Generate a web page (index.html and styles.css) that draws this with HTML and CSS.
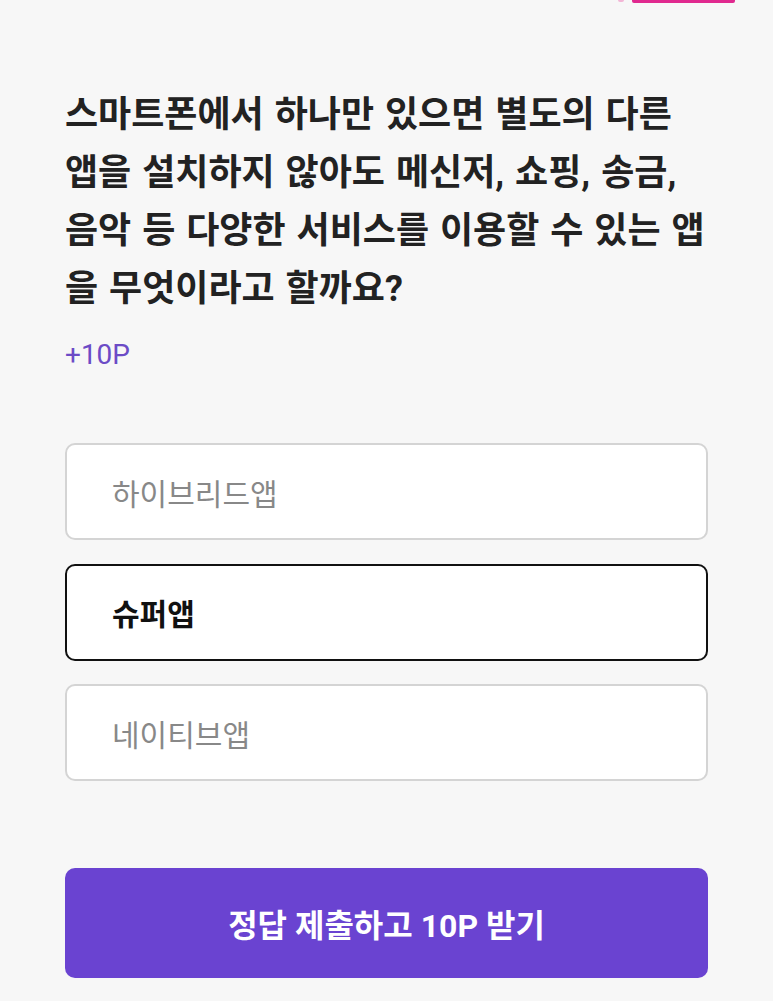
FILE: index.html
```html
<!DOCTYPE html>
<html lang="ko">
<head>
    <meta charset="UTF-8">
    <meta name="viewport" content="width=device-width, initial-scale=1.0">
    <title>퀴즈</title>
    <link rel="stylesheet" href="styles.css">
</head>
<body>
    <div class="topo">
        <span class="ponto"></span>
        <span class="aba"></span>
    </div>

    <div class="quiz">
        <h1 class="pergunta">스마트폰에서 하나만 있으면 별도의 다른 앱을 설치하지 않아도 메신저, 쇼핑, 송금, 음악 등 다양한 서비스를 이용할 수 있는 앱을 무엇이라고 할까요?</h1>
        <p class="pontos">+10P</p>

        <div class="opcoes">
            <button class="opcao" onclick="selecionar(this)">하이브리드앱</button>
            <button class="opcao selecionada" onclick="selecionar(this)">슈퍼앱</button>
            <button class="opcao" onclick="selecionar(this)">네이티브앱</button>
        </div>

        <button class="enviar">정답 제출하고 10P 받기</button>
    </div>

    <script>
        function selecionar(botao) {
            document.querySelectorAll(".opcao").forEach(function (b) {
                b.classList.remove("selecionada")
            })
            botao.classList.add("selecionada")
        }
    </script>
</body>
</html>
```

FILE: styles.css
```css
* {
    margin: 0;
    padding: 0;
    box-sizing: border-box;
}

body {
    background-color: #f7f7f7;
    font-family: Roboto, "Noto Sans CJK KR", sans-serif;
    color: #222;
}

.topo {
    display: flex;
    justify-content: flex-end;
    align-items: flex-start;
    height: 3px;
    padding-right: 38px;
    gap: 8px;
}

.topo .ponto {
    width: 6px;
    height: 2px;
    border-radius: 0 0 3px 3px;
    background-color: #f3b6d6;
}

.topo .aba {
    width: 103px;
    height: 3px;
    border-radius: 0 0 2px 2px;
    background-color: #e0298f;
}

.quiz {
    padding: 83px 65px 0;
}

.pergunta {
    font-size: 36px;
    font-weight: 700;
    line-height: 58px;
    word-spacing: 2px;
    color: #222;
}

.pontos {
    margin-top: 22px;
    font-size: 28px;
    line-height: 30px;
    color: #6c4bc6;
}

.opcoes {
    display: flex;
    flex-direction: column;
    gap: 23.5px;
    margin-top: 73px;
}

.opcao {
    height: 97px;
    padding: 0 45px;
    text-align: left;
    font-family: inherit;
    font-size: 30px;
    color: #888;
    background-color: #fff;
    border: 2px solid #d4d4d4;
    border-radius: 10px;
    cursor: pointer;
}

.opcao.selecionada {
    color: #111;
    font-weight: 700;
    border-color: #111;
}

.enviar {
    width: 100%;
    height: 110px;
    margin-top: 87px;
    border: none;
    border-radius: 10px;
    background-color: #6a43d1;
    color: #fff;
    font-family: inherit;
    font-size: 32px;
    font-weight: 700;
    cursor: pointer;
}
```
